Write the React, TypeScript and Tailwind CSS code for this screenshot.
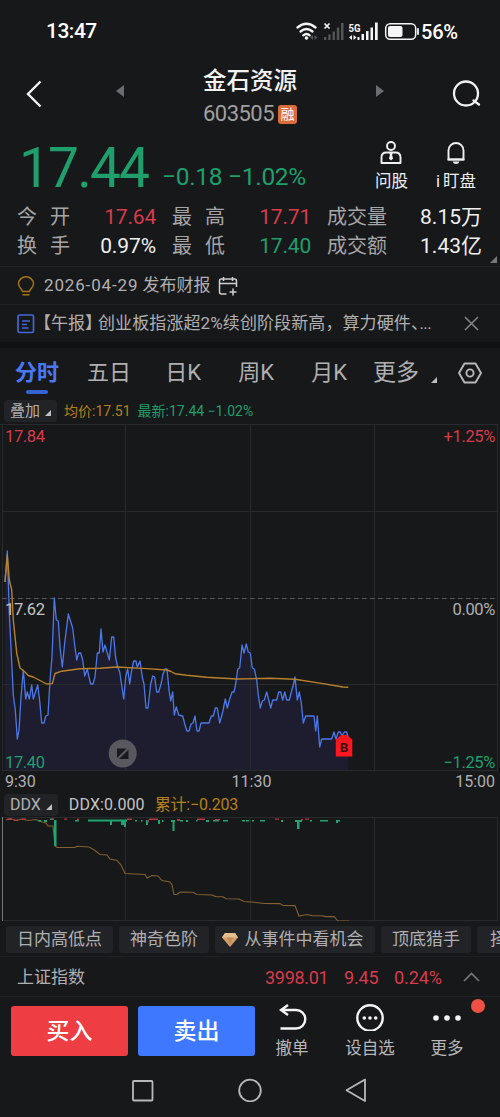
import type { ReactNode } from 'react';

const PRICE_POINTS =
  '5,582 7.3,551 9.3,613 13.3,695 15.3,710 17.3,739 19,730 21,697 23.3,670 25.7,699 27.3,692 29.3,699 31.7,685 33.3,699 37.7,685 39.7,701 41.7,723 44,723 45.7,716 48,715 50,680 52,657 54.3,598 56.3,620 58.3,621 60,647 62.3,667 64.7,643 68.3,614 72.7,628 74.7,645 76.7,660 78.7,653 80.7,653 82.7,660 84.7,676 87.3,669 89,677 90.7,684 93,684 95,677 97.3,653 99.3,653 101,629 103,652 105,645 109.3,660 111.7,637 113.7,637 115.7,658 117.7,667 119.7,672 123.7,699 125.7,677 127.7,669 129.7,684 131.7,670 133.7,661 136,661 137.3,667 140,661 142.3,677 144,684 146,708 148,708 150.7,684 152.7,676 154.7,677 156.7,692 158.7,692 161.3,683 162.7,675 165,669 167,669 169,690 170.7,701 172.7,692 174.3,715 176.3,707 178.7,715 182.7,716 185,725 187,731 189,731 191,724 193,723 195,716 197,731 199,731 201,723 209,723 211.3,716 213.3,716 215.3,708 217.3,708 219.7,723 222.7,712 225.3,699 227.3,708 229.7,699 232,692 234,692 236,682 237.7,669 239.7,668 242,645 244,653 246.3,644 248.3,652 250.3,653 252.3,668 254.3,669 256.7,680 258.3,695 260.3,708 262.3,701 264.3,700 266.7,692 270.7,708 272.7,700 276.7,700 278.7,692 280.7,692 282.7,700 284.7,692 286.7,700 289.3,700 291.3,692 293.3,685 295,677 297.3,700 299.3,692 301.3,703 303.3,723 305.7,716 314,716 315.7,731 317.3,716 319.7,747 321.7,739 331.7,739 334,732 336,739 338.3,732 340.3,732 342,736 344.3,732 346.7,732 348.3,738';

const AVERAGE_POINTS =
  '5,582 7.3,555 9.3,580 11.7,590 13.3,620 16.7,653 20,668 25,672 28.3,675.5 33.3,677 39,680 46.7,684 52.3,683.6 55,673.5 61.7,671.2 80,668.7 100,668.3 116.7,667 146.7,668.6 167,670 171,671.5 175,673.7 186.7,675.3 206.7,677.3 236.7,679 270,678.3 295,679.3 316.7,682.6 343,687 348.3,687.3';

const DDX_POINTS =
  '6,820 10,818.5 16,820.5 22,819 28,820.5 36,819.5 42,822 46,823 48,826 53,826 55,846 57,847.5 75,847.5 77,846.3 89,847 95,850.5 100,854.5 107,855 110,859 117,860.5 121,865 125,873.5 145,874.5 147,878 152,875.5 158,876 162,880.5 170,882 172,885 174,894.5 177,894.5 180,892 193,892.3 197,894.5 212,895 216,896.6 223,896.8 226,898.8 239,899 244,901.5 252,902 264,903.5 280,903.6 283,905.5 295,905.6 299,916 307,914.5 312,915.6 322,915.8 326,916.6 334,916.6 338,921 349,921';

// [x, y, width, height]
const DDX_GREEN_BARS = [
  [38, 820, 3, 1.5], [44, 820, 3, 2], [50, 818.5, 4, 1.5], [54, 820, 2.5, 26],
  [75, 820, 4, 1.5], [88, 819.5, 39, 2], [110, 820, 2, 5], [121, 820, 5, 5], [124, 820, 2, 7],
  [135, 820, 2, 1.5], [141, 820, 1.5, 1.5], [146, 820, 2, 5], [158, 820, 2, 4], [162, 820, 1.5, 2],
  [171, 820, 4, 2], [172.5, 820, 2, 11], [180, 820, 3, 1.5], [186, 820, 2, 2], [196, 820, 1.5, 1.5],
  [206, 820, 3, 2], [213, 820, 6, 1.5], [223, 820, 5, 1.5], [242, 820, 3, 1.5], [246, 820, 3, 1.5],
  [252, 820, 2, 1.5], [260, 820, 5, 1.5], [281, 820, 2, 2], [295, 820, 7, 2], [297, 820, 2.5, 9],
  [310, 820, 2, 1.5], [320, 820, 8, 1.5], [336, 820, 4, 1.5], [336, 820, 2, 3],
];

const DDX_RED_BARS = [
  [7, 818.5, 5, 1.5], [14, 819.5, 4, 1.5], [22, 818.5, 4, 1.5], [51, 818.5, 3, 1.5], [64, 818.5, 3, 1.2],
  [77, 818.5, 2, 2], [127, 818.5, 5, 1.5], [149, 818.5, 9, 1.5], [147, 820, 2, 2], [177, 819, 3, 2],
  [197, 818.5, 8, 1.5], [215, 819, 5, 1.5], [275, 818.5, 4, 1.2], [301, 819, 2, 1.5], [305, 818.5, 4, 1.2],
];

const TABS = ['五日', '日K', '周K', '月K'];

function Triangle({ className }: { className: string }) {
  return (
    <svg viewBox="0 0 6 6" className={className} fill="currentColor">
      <path d="M6 0v6H0z" />
    </svg>
  );
}

function StatusBar() {
  return (
    <div className="flex h-[62px] items-center pt-px pr-[40px] pl-[46px] text-white">
      <span className="flex-1 pt-px text-[21px] font-medium tracking-[-0.5px]">13:47</span>
      <svg viewBox="296 20 124 24" className="h-6 w-[124px]" fill="none">
        <g stroke="#f5f5f5" strokeWidth="2.3" strokeLinecap="round">
          <path d="M297.5 27.5Q306.5 20 315.5 27.5" />
          <path d="M300.5 31.5Q306.5 26.5 312.5 31.5" />
          <path d="M303.3 35.3Q306.5 32.7 309.7 35.3" />
        </g>
        <circle cx="306.5" cy="38" r="1.8" fill="#f5f5f5" />
        <path d="M313 35l-3 2.5 3 2.5zM314.5 35l3 2.5-3 2.5z" fill="#55565a" />
        <g fill="#55565a">
          <path d="M324 37h2.3v3H324zM328.3 34.5h2.3V40h-2.3zM332.6 31.5h2.3V40h-2.3zM336.8 27.500h2.5V40h-2.5zM341 23h2.5v17H341z" />
        </g>
        <path d="M324.5 23.5l5 5m0-5l-5 5" stroke="#f5f5f5" strokeWidth="1.7" />
        <text x="348.5" y="32" fontSize="11" fontWeight="700" fill="#f5f5f5" textLength="12" lengthAdjust="spacingAndGlyphs">5G</text>
        <path d="M352 35l-3 2.5 3 2.5zM353.5 35l3 2.5-3 2.5z" fill="#f5f5f5" />
        <path d="M357.5 37h2v3h-2zM361.5 34h2.5v6h-2.5zM366 31h2.5v9H366zM370.5 27.5h2.5V40h-2.5zM375 22.5h2.7V40H375z" fill="#f5f5f5" />
        <rect x="385.7" y="23.7" width="30" height="15.6" rx="4.5" stroke="#f5f5f5" strokeWidth="1.5" />
        <rect x="388" y="26" width="14.5" height="11" rx="2" fill="#f5f5f5" />
        <path d="M418 29v5" stroke="#f5f5f5" strokeWidth="1.8" strokeLinecap="round" />
      </svg>
      <span className="ml-px w-[39px] text-[20px] font-medium tracking-[-0.2px]">56%</span>
    </div>
  );
}

function Header() {
  return (
    <div className="flex h-[70px] pl-[25px] text-[#f2f2f2]">
      <svg viewBox="0 0 18 28" className="mt-[18px] h-7 w-[18px]" fill="none" stroke="currentColor" strokeWidth="2.4">
        <path d="M15.5 1.5L3 14l12.5 12.5" />
      </svg>
      <svg viewBox="0 0 8 12" className="mt-[23px] ml-[73px] h-3 w-2" fill="#6b6c6f">
        <path d="M8 0v12L0 6z" />
      </svg>
      <div className="flex flex-1 flex-col items-center">
        <h1 className="mt-[3px] text-[23.5px] leading-[32px] font-medium">金石资源</h1>
        <div className="flex h-[34px] items-center gap-1">
          <span className="text-[22px] leading-none tracking-[-0.5px] text-[#a0a0a2]">603505</span>
          <span className="flex h-[19px] w-[19px] items-center justify-center rounded-[3px] bg-[#dc6b3a] text-[14px] leading-none text-white">融</span>
        </div>
      </div>
      <svg viewBox="0 0 8 12" className="mt-[23px] mr-[68px] h-3 w-2" fill="#6b6c6f">
        <path d="M0 0v12l8-6z" />
      </svg>
      <svg viewBox="0 0 29 28" className="mt-[18px] mr-[19px] h-7 w-[29px]" fill="none" stroke="currentColor" strokeWidth="2.3">
        <circle cx="14" cy="13.5" r="12" />
        <path d="M21.5 20.5l5.5 4" strokeLinecap="round" />
      </svg>
    </div>
  );
}

interface StatProps {
  label: string;
  value: string;
  color: string;
}

function Stat({ label, value, color }: StatProps) {
  return (
    <div className="flex items-center justify-between">
      <span className="flex gap-[13px] text-[20px] text-[#a6a6a8]">
        {label.split(' ').map((part) => (
          <span key={part}>{part}</span>
        ))}
      </span>
      <span className={`text-[21px] ${color}`}>{value}</span>
    </div>
  );
}

function Quote() {
  return (
    <div className="relative h-[135px] border-b border-[#222326]">
      <div className="flex h-[71px]">
        <div className="flex flex-1 items-start pl-[19px] whitespace-pre text-[#1f9f6c]">
          <span className="w-[143px] text-[55px] leading-[72px] tracking-[-1.8px]">17.44</span>
          <span className="mt-[28px] text-[24.5px] leading-[34px] tracking-[-0.3px]">−0.18 −1.02%</span>
        </div>
        <div className="mt-[9px] mr-[24px] flex gap-[28px] text-[16.5px] leading-[22px] text-[#f0f0f0]">
          <div className="flex flex-col items-center">
            <svg viewBox="0 0 22 24" className="h-6 w-[22px]" fill="none" stroke="currentColor" strokeWidth="1.9">
              <circle cx="11" cy="5" r="4" />
              <path d="M1.5 22v-5.5Q1.5 11.5 6.5 11.5h9Q20.5 11.5 20.5 16.5V22z" strokeLinejoin="round" />
              <path d="M9.3 12h3.4l-.6 2.2 1 3.3L11 19.5l-2.1-2 1-3.3z" fill="currentColor" stroke="none" />
            </svg>
            <span className="mt-[6px]">问股</span>
          </div>
          <div className="flex flex-col items-center">
            <svg viewBox="0 0 20 24" className="h-6 w-5" fill="none" stroke="currentColor" strokeWidth="1.9">
              <path d="M2.5 18.5V9.5a7.5 7.5 0 0 1 15 0v9z" strokeLinejoin="round" />
              <path d="M1.5 18.5h17" />
              <path d="M6.5 20.5h7q-1 2.5-3.5 2.5t-3.5-2.5z" fill="currentColor" stroke="none" />
            </svg>
            <span className="mt-[6px] flex gap-[3px]">
              <span>i</span>
              <span>盯盘</span>
            </span>
          </div>
        </div>
      </div>
      <div className="grid grid-cols-[139px_139px_155px] gap-x-4 pl-[17px] leading-[29px]">
        <Stat label="今 开" value="17.64" color="text-[#d93b4a] tracking-[-0.2px]" />
        <Stat label="最 高" value="17.71" color="text-[#d93b4a] tracking-[-0.2px]" />
        <Stat label="成交量" value="8.15万" color="text-[#f0f0f0]" />
        <Stat label="换 手" value="0.97%" color="text-[#f0f0f0] tracking-[-0.1px]" />
        <Stat label="最 低" value="17.40" color="text-[#1f9f6c] tracking-[-0.2px]" />
        <Stat label="成交额" value="1.43亿" color="text-[#f0f0f0]" />
      </div>
      <Triangle className="absolute right-[3px] bottom-[3px] h-[7px] w-[7px] text-[#77787a]" />
    </div>
  );
}

function Notices() {
  return (
    <div className="text-[#b0b0b2]">
      <div className="flex h-[38px] items-center border-b border-[#222326] pl-[17px]">
        <svg viewBox="0 0 18 20" className="h-5 w-[18px]" fill="none" stroke="#a87512" strokeWidth="1.5">
          <path d="M5.5 15.5C5.5 13 1.5 12 1.5 7.8a7.5 7 0 0 1 15 0C16.5 12 12.5 13 12.5 15.5zM5.5 18.8h7" />
        </svg>
        <span className="ml-[9px] pt-px text-[17px]"><span className="tracking-[0.85px]">2026-04-29</span> 发布财报</span>
        <svg viewBox="0 0 20 20" className="ml-[7px] h-5 w-5" fill="none" stroke="#d0d0d2" strokeWidth="1.5">
          <path d="M8.5 18H3.5Q1.5 18 1.5 16V5Q1.5 3 3.5 3h13Q18.5 3 18.5 5v6M1.5 7.5h17M5.5 1v4M14.5 1v4M15 12.5v7M11.5 16h7" />
        </svg>
      </div>
      <div className="flex h-[37px] items-center pr-[21px] pl-[17px]">
        <svg viewBox="0 0 18 20" className="h-5 w-[18px]" fill="none" stroke="#4468d8" strokeWidth="1.7">
          <rect x="1" y="1" width="15.5" height="17.5" rx="1.5" />
          <path d="M5 7h8M5 10.500h5M5 14h6.500" strokeWidth="1.4" />
        </svg>
        <span className="flex flex-1 pt-px text-[17px]">
          <span className="-ml-px w-[64px]">【午报】</span>
          <span className="tracking-[0.1px]">创业板指涨超2%续创阶段新高，算力硬件</span>
          <span className="[font-feature-settings:'halt']">、</span>
          <span className="tracking-[-0.6px]">...</span>
        </span>
        <svg viewBox="0 0 15 15" className="h-[15px] w-[15px]" fill="none" stroke="#858688" strokeWidth="1.5">
          <path d="M1 1l13 13M14 1L1 14" />
        </svg>
      </div>
      <div className="h-[6px] bg-[#101113]" />
    </div>
  );
}

function PeriodTabs() {
  return (
    <div className="flex h-[51px] pl-[15px] text-[22px] leading-[50px] text-[#b0b0b2]">
      <div className="flex w-[44px] flex-col items-center font-bold text-[#4a78f5]">
        <span className="h-[42px]">分时</span>
        <span className="h-1 w-[22px] rounded-full bg-[#3563d4]" />
      </div>
      <div className="ml-[28px] flex w-[260px] justify-between">
        {TABS.map((tab) => (
          <span key={tab} className="first:-mr-[3px]">{tab}</span>
        ))}
      </div>
      <span className="ml-[26px] w-[47px] text-[23px]">更多</span>
      <Triangle className="mt-[29px] ml-[11px] h-[6px] w-[6px] text-[#c0c0c2]" />
      <svg viewBox="0 0 24 22" className="mt-[14px] ml-[21px] h-[22px] w-6" fill="none" stroke="#b8b8ba" strokeWidth="1.9">
        <path d="M6.5 1.5h11L23 11l-5.5 9.5h-11L1 11z" strokeLinejoin="round" />
        <circle cx="12" cy="11" r="3.6" />
      </svg>
    </div>
  );
}

function Pill({ children }: { children: ReactNode }) {
  return (
    <div className="flex h-[22px] items-center gap-[5px] rounded-[3px] bg-[#222326] px-[6px] text-[#b0b0b2]">
      <span>{children}</span>
      <Triangle className="mt-1 h-[6px] w-[6px] text-[#c0c0c2]" />
    </div>
  );
}

function PriceChart() {
  return (
    <div>
      <div className="flex h-[25px] items-center pb-px pl-[4px] text-[15px]">
        <Pill>叠加</Pill>
        <span className="ml-[7px] text-[14px] text-[#b5801a]">均价:17.51</span>
        <span className="ml-[7px] text-[14px] text-[#1f9f6c]">最新:17.44 −1.02%</span>
      </div>
      <div className="relative h-[347px] text-[16.5px] leading-none tracking-[-0.35px]">
        <svg viewBox="0 424 500 347" className="block h-[347px] w-[500px]" fill="none">
          <polygon points={`5,771 ${PRICE_POINTS} 348.3,771`} fill="#1e1d2f" />
          <path d="M0 424.5H498M2 511.5H498M2 684.5H498M2 770.5H498M2.5 424V771M125.5 424V771M250.5 424V771M374.5 424V771M497.5 424V771" stroke="#292a2d" />
          <path d="M2 598.5H498" stroke="#5a5b5e" strokeDasharray="4.5 3.5" />
          <polyline points={PRICE_POINTS} stroke="#4c78ea" strokeWidth="1.3" strokeLinejoin="round" />
          <polyline points={AVERAGE_POINTS} stroke="#b9812c" strokeWidth="1.4" strokeLinejoin="round" />
          <circle cx="122.7" cy="753.5" r="14" fill="#58585e" />
          <path d="M117 748.5h9.5L117 758zM128.5 749.5v9.500h-9.500z" fill="#18191d" />
          <path d="M335.8 739.5l5.5-4.5h5.5l5.5 4.5v17h-16.500z" fill="#fb1720" />
          <text x="344" y="752.3" textAnchor="middle" fontSize="13.5" fontWeight="700" fill="#3a1015">B</text>
        </svg>
        <span className="absolute top-[5px] left-[5px] text-[#d93b4a]">17.84</span>
        <span className="absolute top-[5px] right-[5px] text-[#d93b4a]">+1.25%</span>
        <span className="absolute top-[178px] left-[5px] text-[#c4c4c6]">17.62</span>
        <span className="absolute top-[178px] right-[5px] text-[#b0b0b2]">0.00%</span>
        <span className="absolute top-[331px] left-[5px] text-[#1f9f6c]">17.40</span>
        <span className="absolute top-[331px] right-[5px] text-[#1f9f6c]">−1.25%</span>
      </div>
      <div className="grid h-[21px] grid-cols-3 items-center pr-[5px] pl-[5px] text-[16px] leading-none text-[#b0b0b2]">
        <span>9:30</span>
        <span className="pl-[3px] text-center">11:30</span>
        <span className="text-right">15:00</span>
      </div>
    </div>
  );
}

function DdxChart() {
  return (
    <div>
      <div className="flex h-[25px] items-center pl-[4px] text-[16px]">
        <Pill>DDX</Pill>
        <span className="ml-[11px] tracking-[0.1px] text-[#c4c4c6]">DDX:0.000</span>
        <span className="ml-[10px] tracking-[-0.2px] text-[#b5801a]">累计:−0.203</span>
      </div>
      <svg viewBox="0 817 500 104" className="block h-[104px] w-[500px]" fill="none">
        <path d="M2 817.5H498M2 920.5H498M125.5 817V921M250.5 817V921M374.5 817V921M497.5 817V921" stroke="#292a2d" />
        <path d="M2.5 817V921" stroke="#77787a" />
        <polyline points={DDX_POINTS} stroke="#82602f" strokeWidth="1.1" />
        {DDX_GREEN_BARS.map(([x, y, w, h], i) => (
          <rect key={i} x={x} y={y} width={w} height={h} fill="#1fa573" />
        ))}
        {DDX_RED_BARS.map(([x, y, w, h], i) => (
          <rect key={i} x={x} y={y} width={w} height={h} fill="#b93742" />
        ))}
      </svg>
    </div>
  );
}

function Chip({ width, children }: { width: string; children: ReactNode }) {
  return (
    <span className={`flex h-[27px] shrink-0 items-center justify-center rounded-[3px] bg-[#222326] pt-px ${width}`}>{children}</span>
  );
}

function Indicators() {
  return (
    <div className="flex h-[36px] items-center gap-[6px] overflow-hidden border-b border-[#1f2023] pt-px pl-[6px] text-[17px] text-[#b0b0b2]">
      <Chip width="w-[107px]">日内高低点</Chip>
      <Chip width="w-[90px]">神奇色阶</Chip>
      <Chip width="w-[160px]">
        <svg viewBox="0 0 16 14" className="mr-[7px] -ml-[5px] h-[14px] w-4">
          <path d="M3 0h10l3 4.5L8 14 0 4.5z" fill="#d3a06a" />
          <path d="M3 0h10l3 4.5H0z" fill="#e6bf90" />
          <path d="M5 4.5h6L8 13z" fill="#c48e5a" />
        </svg>
        从事件中看机会
      </Chip>
      <Chip width="w-[90px]">顶底猎手</Chip>
      <Chip width="w-[60px]">择时</Chip>
    </div>
  );
}

function IndexBar() {
  return (
    <div className="flex h-[40px] items-center border-b border-[#222326] pt-px pl-[17px] text-[17px] text-[#d93b4a]">
      <span className="flex-1 pt-px text-[#b0b0b2]">上证指数</span>
      <span className="w-[79px] text-[18px] tracking-[-0.3px]">3998.01</span>
      <span className="w-[50px] text-[18px] tracking-[-0.2px]">9.45</span>
      <span className="w-[69px] text-[18px] tracking-[-0.1px]">0.24%</span>
      <svg viewBox="0 0 17 10" className="mr-5 h-[10px] w-[17px]" fill="none" stroke="#77787a" strokeWidth="1.7">
        <path d="M1 9l7.5-7.5L16 9" />
      </svg>
    </div>
  );
}

function Actions() {
  return (
    <div className="relative flex h-[67px] pl-[11px] text-[16.5px] text-[#b8b8ba]">
      <button className="mt-[9px] h-[50px] w-[117px] rounded-[3px] bg-[#ee3d43] pt-0.5 text-[23px] font-medium text-white">买入</button>
      <button className="mt-[9px] ml-[10px] h-[50px] w-[117px] rounded-[3px] bg-[#3e78ff] pt-0.5 text-[23px] font-medium text-white">卖出</button>
      <div className="ml-[17px] flex w-[40px] flex-col items-center pt-[6px]">
        <svg viewBox="0 0 28 28" className="ml-[2px] h-7 w-7" fill="none" stroke="#f5f5f5" strokeWidth="2.4">
          <path d="M9 2L2 7l7 5M2.5 7H17a9 9 0 0 1 0 18.5H1.5" />
        </svg>
        <span className="mt-[6px] leading-6">撤单</span>
      </div>
      <div className="ml-[33px] flex w-[50px] flex-col items-center pt-[6px]">
        <svg viewBox="0 0 28 28" className="h-7 w-7" fill="none" stroke="#f5f5f5" strokeWidth="2.4">
          <circle cx="14" cy="15" r="12.700" />
          <path d="M8.3 15h.01M14 15h.01M19.7 15h.01" strokeWidth="3.6" strokeLinecap="round" />
        </svg>
        <span className="mt-[6px] leading-6">设自选</span>
      </div>
      <div className="ml-[32px] flex w-[40px] flex-col items-center pt-[6px]">
        <svg viewBox="0 0 28 28" className="h-7 w-7" fill="#f5f5f5">
          <circle cx="3" cy="15" r="2.800" />
          <circle cx="14" cy="15" r="2.800" />
          <circle cx="25" cy="15" r="2.800" />
        </svg>
        <span className="mt-[6px] leading-6">更多</span>
      </div>
      <span className="absolute top-[2px] right-[15px] h-[14px] w-[14px] rounded-full bg-[#ee5044]" />
    </div>
  );
}

function NavBar() {
  return (
    <div className="flex h-[53px] justify-center gap-[83px] pt-[14px]">
      <svg viewBox="0 0 24 24" className="h-6 w-6" fill="none" stroke="#b8b8ba" strokeWidth="1.8">
        <rect x="2" y="3" width="19.5" height="19.500" rx="1" />
      </svg>
      <svg viewBox="0 0 24 24" className="h-6 w-6" fill="none" stroke="#b8b8ba" strokeWidth="1.8">
        <circle cx="12" cy="12.5" r="10.8" />
      </svg>
      <svg viewBox="0 0 24 24" className="h-6 w-6" fill="none" stroke="#b8b8ba" strokeWidth="1.8" strokeLinejoin="round">
        <path d="M20 1.5v21.500L1.500 12.300z" />
      </svg>
    </div>
  );
}

export default function App() {
  return (
    <main className="h-[1117px] w-[500px] overflow-hidden bg-[#17181a] font-['Roboto','Noto_Sans_CJK_SC',sans-serif] whitespace-nowrap">
      <StatusBar />
      <Header />
      <Quote />
      <Notices />
      <PeriodTabs />
      <PriceChart />
      <DdxChart />
      <Indicators />
      <IndexBar />
      <Actions />
      <NavBar />
    </main>
  );
}
